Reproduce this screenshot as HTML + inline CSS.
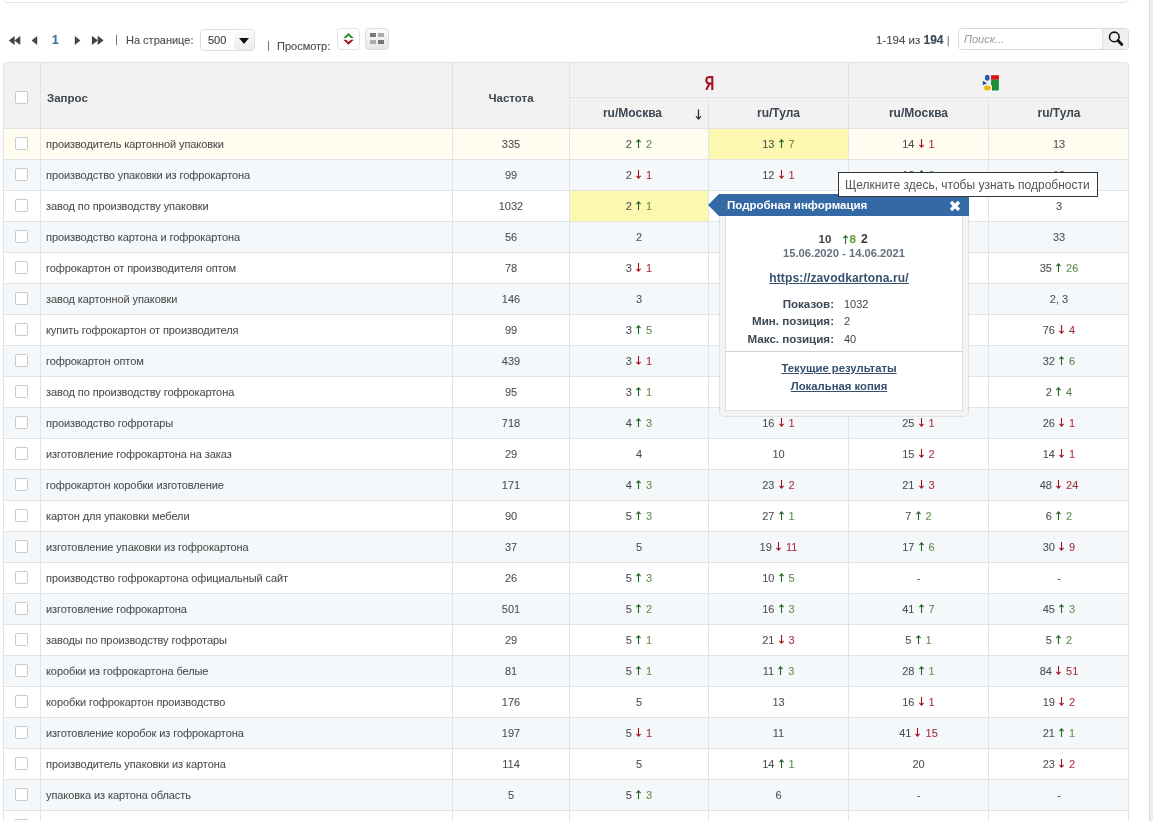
<!DOCTYPE html>
<html><head><meta charset="utf-8"><style>
*{box-sizing:border-box}
html,body{margin:0;padding:0;background:#fff;width:1153px;height:821px;overflow:hidden;position:relative;font-family:"Liberation Sans",sans-serif;}
.abs{position:absolute}
#topbox{position:absolute;left:3px;top:-10px;width:1126px;height:13px;border:1px solid #e3e3e3;border-radius:4px;background:#fff}
#scroll{position:absolute;left:1149px;top:0;width:4px;height:821px;background:#ececec;border-left:1px solid #d9d9d9}
#table{position:absolute;left:3px;top:62px;width:1126px;height:800px;border:1px solid #e3e3e3;border-radius:4px 4px 0 0;background:#f2f2f2;overflow:hidden}
.row{position:absolute;left:4px;width:1124px;height:30px}
.hl{position:absolute;height:30px;background:#fdf8b0}
.hline{position:absolute;left:4px;width:1124px;height:1px;background:#e1e3e4}
.vline{position:absolute;width:1px;height:800px;background:#e1e3e4}
.cb{position:absolute;width:13px;height:13px;border:1px solid #c9c9c9;border-radius:1.5px;background:#fff}
.t{position:absolute;height:30px;line-height:30px;font-size:11px;color:#4e4e4e;white-space:nowrap;-webkit-text-stroke:0.08px #4e4e4e}
.q{letter-spacing:-0.08px}
.q{left:46px}
.c{text-align:center}
.ar{vertical-align:0px;margin:0 2px 0 1px}
.nu{color:#649548} .nd{color:#b8283a}
.hd{position:absolute;font-weight:bold;color:#3d4852;white-space:nowrap;text-align:center;line-height:14px}
.tb{font-size:11px;color:#4a4a4a;line-height:14px;white-space:nowrap;-webkit-text-stroke:0.1px #4a4a4a}
.lbl{margin-top:0.4px;left:726px;width:108px;text-align:right;font-weight:bold;font-size:11.6px;color:#3d4852;line-height:15px;white-space:nowrap}
.val{left:844px;font-size:11px;color:#444;line-height:15px;margin-top:1px}
.lnk{left:721px;width:236px;text-align:center;font-weight:bold;font-size:11.3px;color:#34506e;text-decoration:underline;line-height:15px}
</style></head><body><div id="wrap" style="position:absolute;left:0;top:0;width:1153px;height:821px;will-change:transform">
<div id="topbox"></div>
<div id="scroll"></div>
<svg class="abs" style="left:0;top:30px" width="110" height="20" viewBox="0 30 110 20"><g fill="#454545"><path d="M8.7 40.4L14.6 35.9V44.9Z"/><path d="M14.4 40.4L20.3 35.9V44.9Z"/><path d="M31.6 40.4L37.2 35.9V44.9Z"/><path d="M80.4 40.4L74.8 35.9V44.9Z"/><path d="M97.8 40.4L91.9 35.9V44.9Z"/><path d="M103.5 40.4L97.6 35.9V44.9Z"/></g></svg><div class="abs tb" style="left:52px;top:33px;font-weight:bold;color:#2a7ba3;font-size:12px">1</div><div class="abs" style="left:92px;top:35.5px;width:0;height:0;border-top:4.8px solid transparent;border-bottom:4.8px solid transparent;border-left:5.6px solid #444"></div><div class="abs" style="left:97.6px;top:35.5px;width:0;height:0;border-top:4.8px solid transparent;border-bottom:4.8px solid transparent;border-left:5.6px solid #444"></div><div class="abs" style="left:116px;top:35px;width:1px;height:10px;background:#777"></div><div class="abs tb" style="left:126px;top:33px">На странице:</div><div class="abs" style="left:200px;top:29px;width:55px;height:22px;border:1px solid #dedede;border-radius:4px;background:#fff;overflow:hidden"><div class="abs tb" style="left:7px;top:3px;color:#333">500</div><div class="abs" style="left:33px;top:1px;width:20px;height:19px;border-radius:3px;background:linear-gradient(#fbfbfb,#ececec)"></div><div class="abs" style="left:38px;top:8px;width:0;height:0;border-left:5px solid transparent;border-right:5px solid transparent;border-top:6px solid #111"></div></div><div class="abs" style="left:268px;top:41px;width:1px;height:10px;background:#777"></div><div class="abs tb" style="left:277px;top:39px">Просмотр:</div><div class="abs" style="left:337px;top:28px;width:23px;height:22px;border:1px solid #e3e3e3;border-radius:4px;background:#fff"></div><svg class="abs" style="left:343px;top:32px" width="11" height="14" viewBox="0 0 11 14"><path d="M0.3 5.9L5.5 0.9L10.7 5.9H7.9L5.5 3.6L3.1 5.9Z" fill="#1f8a2a"/><path d="M0.3 7.8H3.1L5.5 10.1L7.9 7.8H10.7L5.5 12.8Z" fill="#a51218"/></svg><div class="abs" style="left:365px;top:28px;width:24px;height:22px;border:1px solid #dcdcdc;border-radius:4px;background:linear-gradient(#fafafa,#e6e6e6)"></div><div class="abs" style="left:370px;top:33px;width:6px;height:4px;background:#777"></div><div class="abs" style="left:378px;top:33px;width:6px;height:4px;background:#aaa"></div><div class="abs" style="left:370px;top:40px;width:6px;height:4px;background:#aaa"></div><div class="abs" style="left:378px;top:40px;width:6px;height:4px;background:#777"></div><div class="abs tb" style="left:876px;top:33px;font-size:11.5px">1-194 из <b style="color:#3a4955;font-size:12px">194</b> <span style="color:#7a8a99">|</span></div><div class="abs" style="left:958px;top:28px;width:171px;height:22px;border:1px solid #d9d9d9;border-radius:4px;background:#fff;overflow:hidden"><div class="abs" style="left:5px;top:3px;font-size:11px;font-style:italic;color:#9a9a9a;line-height:14px">Поиск...</div><div class="abs" style="left:143px;top:0;width:27px;height:20px;background:#efefef;border-left:1px solid #e2e2e2"></div></div><svg class="abs" style="left:1106px;top:30px" width="20" height="18" viewBox="0 0 20 18"><circle cx="8.3" cy="6.9" r="4.8" stroke="#111" stroke-width="1.6" fill="none"/><path d="M12 10.6L15.8 14.4" stroke="#111" stroke-width="2.8" stroke-linecap="round"/></svg>
<div id="table"></div>
<div class="row" style="top:129px;background:#fffdef"></div><div class="hl" style="left:709px;top:129px;width:139px"></div><div class="row" style="top:160px;background:#f5f8fb"></div><div class="row" style="top:191px;background:#ffffff"></div><div class="hl" style="left:570px;top:191px;width:138px"></div><div class="row" style="top:222px;background:#f5f8fb"></div><div class="row" style="top:253px;background:#ffffff"></div><div class="row" style="top:284px;background:#f5f8fb"></div><div class="row" style="top:315px;background:#ffffff"></div><div class="row" style="top:346px;background:#f5f8fb"></div><div class="row" style="top:377px;background:#ffffff"></div><div class="row" style="top:408px;background:#f5f8fb"></div><div class="row" style="top:439px;background:#ffffff"></div><div class="row" style="top:470px;background:#f5f8fb"></div><div class="row" style="top:501px;background:#ffffff"></div><div class="row" style="top:532px;background:#f5f8fb"></div><div class="row" style="top:563px;background:#ffffff"></div><div class="row" style="top:594px;background:#f5f8fb"></div><div class="row" style="top:625px;background:#ffffff"></div><div class="row" style="top:656px;background:#f5f8fb"></div><div class="row" style="top:687px;background:#ffffff"></div><div class="row" style="top:718px;background:#f5f8fb"></div><div class="row" style="top:749px;background:#ffffff"></div><div class="row" style="top:780px;background:#f5f8fb"></div><div class="row" style="top:811px;background:#ffffff"></div>
<div class="abs" style="left:570px;top:97px;width:558px;height:1px;background:#e1e3e4"></div>
<div class="abs" style="left:4px;top:128px;width:1124px;height:1px;background:#e1e3e4"></div>
<div class="hline" style="top:159px"></div><div class="hline" style="top:190px"></div><div class="hline" style="top:221px"></div><div class="hline" style="top:252px"></div><div class="hline" style="top:283px"></div><div class="hline" style="top:314px"></div><div class="hline" style="top:345px"></div><div class="hline" style="top:376px"></div><div class="hline" style="top:407px"></div><div class="hline" style="top:438px"></div><div class="hline" style="top:469px"></div><div class="hline" style="top:500px"></div><div class="hline" style="top:531px"></div><div class="hline" style="top:562px"></div><div class="hline" style="top:593px"></div><div class="hline" style="top:624px"></div><div class="hline" style="top:655px"></div><div class="hline" style="top:686px"></div><div class="hline" style="top:717px"></div><div class="hline" style="top:748px"></div><div class="hline" style="top:779px"></div><div class="hline" style="top:810px"></div><div class="hline" style="top:841px"></div><div class="vline" style="left:40px;top:63px"></div><div class="vline" style="left:452px;top:63px"></div><div class="vline" style="left:569px;top:63px"></div><div class="vline" style="left:708px;top:98px"></div><div class="vline" style="left:848px;top:63px"></div><div class="vline" style="left:988px;top:98px"></div>
<div class="cb" style="left:15px;top:137px"></div><div class="t q" style="top:129px">производитель картонной упаковки</div><div class="t c" style="top:129px;left:453px;width:116px">335</div><div class="t c" style="top:129px;left:570px;width:138px">2 <svg class="ar" width="5" height="9" viewBox="0 0 5 9"><path d="M2.5 0.6V9M0.4 3.1L2.5 0.9L4.6 3.1" stroke="#226622" stroke-width="1.1" fill="none"/></svg> <span class="nu">2</span></div><div class="t c" style="top:129px;left:709px;width:139px">13 <svg class="ar" width="5" height="9" viewBox="0 0 5 9"><path d="M2.5 0.6V9M0.4 3.1L2.5 0.9L4.6 3.1" stroke="#226622" stroke-width="1.1" fill="none"/></svg> <span class="nu">7</span></div><div class="t c" style="top:129px;left:849px;width:139px">14 <svg class="ar" width="5" height="9" viewBox="0 0 5 9"><path d="M2.5 0V8.4M0.4 5.9L2.5 8.1L4.6 5.9" stroke="#a8101c" stroke-width="1.1" fill="none"/></svg> <span class="nd">1</span></div><div class="t c" style="top:129px;left:989px;width:140px">13</div><div class="cb" style="left:15px;top:168px"></div><div class="t q" style="top:160px">производство упаковки из гофрокартона</div><div class="t c" style="top:160px;left:453px;width:116px">99</div><div class="t c" style="top:160px;left:570px;width:138px">2 <svg class="ar" width="5" height="9" viewBox="0 0 5 9"><path d="M2.5 0V8.4M0.4 5.9L2.5 8.1L4.6 5.9" stroke="#a8101c" stroke-width="1.1" fill="none"/></svg> <span class="nd">1</span></div><div class="t c" style="top:160px;left:709px;width:139px">12 <svg class="ar" width="5" height="9" viewBox="0 0 5 9"><path d="M2.5 0V8.4M0.4 5.9L2.5 8.1L4.6 5.9" stroke="#a8101c" stroke-width="1.1" fill="none"/></svg> <span class="nd">1</span></div><div class="t c" style="top:160px;left:849px;width:139px">13 <svg class="ar" width="5" height="9" viewBox="0 0 5 9"><path d="M2.5 0.6V9M0.4 3.1L2.5 0.9L4.6 3.1" stroke="#226622" stroke-width="1.1" fill="none"/></svg> <span class="nu">3</span></div><div class="t c" style="top:160px;left:989px;width:140px">13</div><div class="cb" style="left:15px;top:199px"></div><div class="t q" style="top:191px">завод по производству упаковки</div><div class="t c" style="top:191px;left:453px;width:116px">1032</div><div class="t c" style="top:191px;left:570px;width:138px">2 <svg class="ar" width="5" height="9" viewBox="0 0 5 9"><path d="M2.5 0.6V9M0.4 3.1L2.5 0.9L4.6 3.1" stroke="#226622" stroke-width="1.1" fill="none"/></svg> <span class="nu">1</span></div><div class="t c" style="top:191px;left:709px;width:139px">10 <svg class="ar" width="5" height="9" viewBox="0 0 5 9"><path d="M2.5 0.6V9M0.4 3.1L2.5 0.9L4.6 3.1" stroke="#226622" stroke-width="1.1" fill="none"/></svg> <span class="nu">8</span></div><div class="t c" style="top:191px;left:989px;width:140px">3</div><div class="cb" style="left:15px;top:230px"></div><div class="t q" style="top:222px">производство картона и гофрокартона</div><div class="t c" style="top:222px;left:453px;width:116px">56</div><div class="t c" style="top:222px;left:570px;width:138px">2</div><div class="t c" style="top:222px;left:989px;width:140px">33</div><div class="cb" style="left:15px;top:261px"></div><div class="t q" style="top:253px">гофрокартон от производителя оптом</div><div class="t c" style="top:253px;left:453px;width:116px">78</div><div class="t c" style="top:253px;left:570px;width:138px">3 <svg class="ar" width="5" height="9" viewBox="0 0 5 9"><path d="M2.5 0V8.4M0.4 5.9L2.5 8.1L4.6 5.9" stroke="#a8101c" stroke-width="1.1" fill="none"/></svg> <span class="nd">1</span></div><div class="t c" style="top:253px;left:989px;width:140px">35 <svg class="ar" width="5" height="9" viewBox="0 0 5 9"><path d="M2.5 0.6V9M0.4 3.1L2.5 0.9L4.6 3.1" stroke="#226622" stroke-width="1.1" fill="none"/></svg> <span class="nu">26</span></div><div class="cb" style="left:15px;top:292px"></div><div class="t q" style="top:284px">завод картонной упаковки</div><div class="t c" style="top:284px;left:453px;width:116px">146</div><div class="t c" style="top:284px;left:570px;width:138px">3</div><div class="t c" style="top:284px;left:989px;width:140px">2, 3</div><div class="cb" style="left:15px;top:323px"></div><div class="t q" style="top:315px">купить гофрокартон от производителя</div><div class="t c" style="top:315px;left:453px;width:116px">99</div><div class="t c" style="top:315px;left:570px;width:138px">3 <svg class="ar" width="5" height="9" viewBox="0 0 5 9"><path d="M2.5 0.6V9M0.4 3.1L2.5 0.9L4.6 3.1" stroke="#226622" stroke-width="1.1" fill="none"/></svg> <span class="nu">5</span></div><div class="t c" style="top:315px;left:989px;width:140px">76 <svg class="ar" width="5" height="9" viewBox="0 0 5 9"><path d="M2.5 0V8.4M0.4 5.9L2.5 8.1L4.6 5.9" stroke="#a8101c" stroke-width="1.1" fill="none"/></svg> <span class="nd">4</span></div><div class="cb" style="left:15px;top:354px"></div><div class="t q" style="top:346px">гофрокартон оптом</div><div class="t c" style="top:346px;left:453px;width:116px">439</div><div class="t c" style="top:346px;left:570px;width:138px">3 <svg class="ar" width="5" height="9" viewBox="0 0 5 9"><path d="M2.5 0V8.4M0.4 5.9L2.5 8.1L4.6 5.9" stroke="#a8101c" stroke-width="1.1" fill="none"/></svg> <span class="nd">1</span></div><div class="t c" style="top:346px;left:989px;width:140px">32 <svg class="ar" width="5" height="9" viewBox="0 0 5 9"><path d="M2.5 0.6V9M0.4 3.1L2.5 0.9L4.6 3.1" stroke="#226622" stroke-width="1.1" fill="none"/></svg> <span class="nu">6</span></div><div class="cb" style="left:15px;top:385px"></div><div class="t q" style="top:377px">завод по производству гофрокартона</div><div class="t c" style="top:377px;left:453px;width:116px">95</div><div class="t c" style="top:377px;left:570px;width:138px">3 <svg class="ar" width="5" height="9" viewBox="0 0 5 9"><path d="M2.5 0.6V9M0.4 3.1L2.5 0.9L4.6 3.1" stroke="#226622" stroke-width="1.1" fill="none"/></svg> <span class="nu">1</span></div><div class="t c" style="top:377px;left:989px;width:140px">2 <svg class="ar" width="5" height="9" viewBox="0 0 5 9"><path d="M2.5 0.6V9M0.4 3.1L2.5 0.9L4.6 3.1" stroke="#226622" stroke-width="1.1" fill="none"/></svg> <span class="nu">4</span></div><div class="cb" style="left:15px;top:416px"></div><div class="t q" style="top:408px">производство гофротары</div><div class="t c" style="top:408px;left:453px;width:116px">718</div><div class="t c" style="top:408px;left:570px;width:138px">4 <svg class="ar" width="5" height="9" viewBox="0 0 5 9"><path d="M2.5 0.6V9M0.4 3.1L2.5 0.9L4.6 3.1" stroke="#226622" stroke-width="1.1" fill="none"/></svg> <span class="nu">3</span></div><div class="t c" style="top:408px;left:709px;width:139px">16 <svg class="ar" width="5" height="9" viewBox="0 0 5 9"><path d="M2.5 0V8.4M0.4 5.9L2.5 8.1L4.6 5.9" stroke="#a8101c" stroke-width="1.1" fill="none"/></svg> <span class="nd">1</span></div><div class="t c" style="top:408px;left:849px;width:139px">25 <svg class="ar" width="5" height="9" viewBox="0 0 5 9"><path d="M2.5 0V8.4M0.4 5.9L2.5 8.1L4.6 5.9" stroke="#a8101c" stroke-width="1.1" fill="none"/></svg> <span class="nd">1</span></div><div class="t c" style="top:408px;left:989px;width:140px">26 <svg class="ar" width="5" height="9" viewBox="0 0 5 9"><path d="M2.5 0V8.4M0.4 5.9L2.5 8.1L4.6 5.9" stroke="#a8101c" stroke-width="1.1" fill="none"/></svg> <span class="nd">1</span></div><div class="cb" style="left:15px;top:447px"></div><div class="t q" style="top:439px">изготовление гофрокартона на заказ</div><div class="t c" style="top:439px;left:453px;width:116px">29</div><div class="t c" style="top:439px;left:570px;width:138px">4</div><div class="t c" style="top:439px;left:709px;width:139px">10</div><div class="t c" style="top:439px;left:849px;width:139px">15 <svg class="ar" width="5" height="9" viewBox="0 0 5 9"><path d="M2.5 0V8.4M0.4 5.9L2.5 8.1L4.6 5.9" stroke="#a8101c" stroke-width="1.1" fill="none"/></svg> <span class="nd">2</span></div><div class="t c" style="top:439px;left:989px;width:140px">14 <svg class="ar" width="5" height="9" viewBox="0 0 5 9"><path d="M2.5 0V8.4M0.4 5.9L2.5 8.1L4.6 5.9" stroke="#a8101c" stroke-width="1.1" fill="none"/></svg> <span class="nd">1</span></div><div class="cb" style="left:15px;top:478px"></div><div class="t q" style="top:470px">гофрокартон коробки изготовление</div><div class="t c" style="top:470px;left:453px;width:116px">171</div><div class="t c" style="top:470px;left:570px;width:138px">4 <svg class="ar" width="5" height="9" viewBox="0 0 5 9"><path d="M2.5 0.6V9M0.4 3.1L2.5 0.9L4.6 3.1" stroke="#226622" stroke-width="1.1" fill="none"/></svg> <span class="nu">3</span></div><div class="t c" style="top:470px;left:709px;width:139px">23 <svg class="ar" width="5" height="9" viewBox="0 0 5 9"><path d="M2.5 0V8.4M0.4 5.9L2.5 8.1L4.6 5.9" stroke="#a8101c" stroke-width="1.1" fill="none"/></svg> <span class="nd">2</span></div><div class="t c" style="top:470px;left:849px;width:139px">21 <svg class="ar" width="5" height="9" viewBox="0 0 5 9"><path d="M2.5 0V8.4M0.4 5.9L2.5 8.1L4.6 5.9" stroke="#a8101c" stroke-width="1.1" fill="none"/></svg> <span class="nd">3</span></div><div class="t c" style="top:470px;left:989px;width:140px">48 <svg class="ar" width="5" height="9" viewBox="0 0 5 9"><path d="M2.5 0V8.4M0.4 5.9L2.5 8.1L4.6 5.9" stroke="#a8101c" stroke-width="1.1" fill="none"/></svg> <span class="nd">24</span></div><div class="cb" style="left:15px;top:509px"></div><div class="t q" style="top:501px">картон для упаковки мебели</div><div class="t c" style="top:501px;left:453px;width:116px">90</div><div class="t c" style="top:501px;left:570px;width:138px">5 <svg class="ar" width="5" height="9" viewBox="0 0 5 9"><path d="M2.5 0.6V9M0.4 3.1L2.5 0.9L4.6 3.1" stroke="#226622" stroke-width="1.1" fill="none"/></svg> <span class="nu">3</span></div><div class="t c" style="top:501px;left:709px;width:139px">27 <svg class="ar" width="5" height="9" viewBox="0 0 5 9"><path d="M2.5 0.6V9M0.4 3.1L2.5 0.9L4.6 3.1" stroke="#226622" stroke-width="1.1" fill="none"/></svg> <span class="nu">1</span></div><div class="t c" style="top:501px;left:849px;width:139px">7 <svg class="ar" width="5" height="9" viewBox="0 0 5 9"><path d="M2.5 0.6V9M0.4 3.1L2.5 0.9L4.6 3.1" stroke="#226622" stroke-width="1.1" fill="none"/></svg> <span class="nu">2</span></div><div class="t c" style="top:501px;left:989px;width:140px">6 <svg class="ar" width="5" height="9" viewBox="0 0 5 9"><path d="M2.5 0.6V9M0.4 3.1L2.5 0.9L4.6 3.1" stroke="#226622" stroke-width="1.1" fill="none"/></svg> <span class="nu">2</span></div><div class="cb" style="left:15px;top:540px"></div><div class="t q" style="top:532px">изготовление упаковки из гофрокартона</div><div class="t c" style="top:532px;left:453px;width:116px">37</div><div class="t c" style="top:532px;left:570px;width:138px">5</div><div class="t c" style="top:532px;left:709px;width:139px">19 <svg class="ar" width="5" height="9" viewBox="0 0 5 9"><path d="M2.5 0V8.4M0.4 5.9L2.5 8.1L4.6 5.9" stroke="#a8101c" stroke-width="1.1" fill="none"/></svg> <span class="nd">11</span></div><div class="t c" style="top:532px;left:849px;width:139px">17 <svg class="ar" width="5" height="9" viewBox="0 0 5 9"><path d="M2.5 0.6V9M0.4 3.1L2.5 0.9L4.6 3.1" stroke="#226622" stroke-width="1.1" fill="none"/></svg> <span class="nu">6</span></div><div class="t c" style="top:532px;left:989px;width:140px">30 <svg class="ar" width="5" height="9" viewBox="0 0 5 9"><path d="M2.5 0V8.4M0.4 5.9L2.5 8.1L4.6 5.9" stroke="#a8101c" stroke-width="1.1" fill="none"/></svg> <span class="nd">9</span></div><div class="cb" style="left:15px;top:571px"></div><div class="t q" style="top:563px">производство гофрокартона официальный сайт</div><div class="t c" style="top:563px;left:453px;width:116px">26</div><div class="t c" style="top:563px;left:570px;width:138px">5 <svg class="ar" width="5" height="9" viewBox="0 0 5 9"><path d="M2.5 0.6V9M0.4 3.1L2.5 0.9L4.6 3.1" stroke="#226622" stroke-width="1.1" fill="none"/></svg> <span class="nu">3</span></div><div class="t c" style="top:563px;left:709px;width:139px">10 <svg class="ar" width="5" height="9" viewBox="0 0 5 9"><path d="M2.5 0.6V9M0.4 3.1L2.5 0.9L4.6 3.1" stroke="#226622" stroke-width="1.1" fill="none"/></svg> <span class="nu">5</span></div><div class="t c" style="top:563px;left:849px;width:139px">-</div><div class="t c" style="top:563px;left:989px;width:140px">-</div><div class="cb" style="left:15px;top:602px"></div><div class="t q" style="top:594px">изготовление гофрокартона</div><div class="t c" style="top:594px;left:453px;width:116px">501</div><div class="t c" style="top:594px;left:570px;width:138px">5 <svg class="ar" width="5" height="9" viewBox="0 0 5 9"><path d="M2.5 0.6V9M0.4 3.1L2.5 0.9L4.6 3.1" stroke="#226622" stroke-width="1.1" fill="none"/></svg> <span class="nu">2</span></div><div class="t c" style="top:594px;left:709px;width:139px">16 <svg class="ar" width="5" height="9" viewBox="0 0 5 9"><path d="M2.5 0.6V9M0.4 3.1L2.5 0.9L4.6 3.1" stroke="#226622" stroke-width="1.1" fill="none"/></svg> <span class="nu">3</span></div><div class="t c" style="top:594px;left:849px;width:139px">41 <svg class="ar" width="5" height="9" viewBox="0 0 5 9"><path d="M2.5 0.6V9M0.4 3.1L2.5 0.9L4.6 3.1" stroke="#226622" stroke-width="1.1" fill="none"/></svg> <span class="nu">7</span></div><div class="t c" style="top:594px;left:989px;width:140px">45 <svg class="ar" width="5" height="9" viewBox="0 0 5 9"><path d="M2.5 0.6V9M0.4 3.1L2.5 0.9L4.6 3.1" stroke="#226622" stroke-width="1.1" fill="none"/></svg> <span class="nu">3</span></div><div class="cb" style="left:15px;top:633px"></div><div class="t q" style="top:625px">заводы по производству гофротары</div><div class="t c" style="top:625px;left:453px;width:116px">29</div><div class="t c" style="top:625px;left:570px;width:138px">5 <svg class="ar" width="5" height="9" viewBox="0 0 5 9"><path d="M2.5 0.6V9M0.4 3.1L2.5 0.9L4.6 3.1" stroke="#226622" stroke-width="1.1" fill="none"/></svg> <span class="nu">1</span></div><div class="t c" style="top:625px;left:709px;width:139px">21 <svg class="ar" width="5" height="9" viewBox="0 0 5 9"><path d="M2.5 0V8.4M0.4 5.9L2.5 8.1L4.6 5.9" stroke="#a8101c" stroke-width="1.1" fill="none"/></svg> <span class="nd">3</span></div><div class="t c" style="top:625px;left:849px;width:139px">5 <svg class="ar" width="5" height="9" viewBox="0 0 5 9"><path d="M2.5 0.6V9M0.4 3.1L2.5 0.9L4.6 3.1" stroke="#226622" stroke-width="1.1" fill="none"/></svg> <span class="nu">1</span></div><div class="t c" style="top:625px;left:989px;width:140px">5 <svg class="ar" width="5" height="9" viewBox="0 0 5 9"><path d="M2.5 0.6V9M0.4 3.1L2.5 0.9L4.6 3.1" stroke="#226622" stroke-width="1.1" fill="none"/></svg> <span class="nu">2</span></div><div class="cb" style="left:15px;top:664px"></div><div class="t q" style="top:656px">коробки из гофрокартона белые</div><div class="t c" style="top:656px;left:453px;width:116px">81</div><div class="t c" style="top:656px;left:570px;width:138px">5 <svg class="ar" width="5" height="9" viewBox="0 0 5 9"><path d="M2.5 0.6V9M0.4 3.1L2.5 0.9L4.6 3.1" stroke="#226622" stroke-width="1.1" fill="none"/></svg> <span class="nu">1</span></div><div class="t c" style="top:656px;left:709px;width:139px">11 <svg class="ar" width="5" height="9" viewBox="0 0 5 9"><path d="M2.5 0.6V9M0.4 3.1L2.5 0.9L4.6 3.1" stroke="#226622" stroke-width="1.1" fill="none"/></svg> <span class="nu">3</span></div><div class="t c" style="top:656px;left:849px;width:139px">28 <svg class="ar" width="5" height="9" viewBox="0 0 5 9"><path d="M2.5 0.6V9M0.4 3.1L2.5 0.9L4.6 3.1" stroke="#226622" stroke-width="1.1" fill="none"/></svg> <span class="nu">1</span></div><div class="t c" style="top:656px;left:989px;width:140px">84 <svg class="ar" width="5" height="9" viewBox="0 0 5 9"><path d="M2.5 0V8.4M0.4 5.9L2.5 8.1L4.6 5.9" stroke="#a8101c" stroke-width="1.1" fill="none"/></svg> <span class="nd">51</span></div><div class="cb" style="left:15px;top:695px"></div><div class="t q" style="top:687px">коробки гофрокартон производство</div><div class="t c" style="top:687px;left:453px;width:116px">176</div><div class="t c" style="top:687px;left:570px;width:138px">5</div><div class="t c" style="top:687px;left:709px;width:139px">13</div><div class="t c" style="top:687px;left:849px;width:139px">16 <svg class="ar" width="5" height="9" viewBox="0 0 5 9"><path d="M2.5 0V8.4M0.4 5.9L2.5 8.1L4.6 5.9" stroke="#a8101c" stroke-width="1.1" fill="none"/></svg> <span class="nd">1</span></div><div class="t c" style="top:687px;left:989px;width:140px">19 <svg class="ar" width="5" height="9" viewBox="0 0 5 9"><path d="M2.5 0V8.4M0.4 5.9L2.5 8.1L4.6 5.9" stroke="#a8101c" stroke-width="1.1" fill="none"/></svg> <span class="nd">2</span></div><div class="cb" style="left:15px;top:726px"></div><div class="t q" style="top:718px">изготовление коробок из гофрокартона</div><div class="t c" style="top:718px;left:453px;width:116px">197</div><div class="t c" style="top:718px;left:570px;width:138px">5 <svg class="ar" width="5" height="9" viewBox="0 0 5 9"><path d="M2.5 0V8.4M0.4 5.9L2.5 8.1L4.6 5.9" stroke="#a8101c" stroke-width="1.1" fill="none"/></svg> <span class="nd">1</span></div><div class="t c" style="top:718px;left:709px;width:139px">11</div><div class="t c" style="top:718px;left:849px;width:139px">41 <svg class="ar" width="5" height="9" viewBox="0 0 5 9"><path d="M2.5 0V8.4M0.4 5.9L2.5 8.1L4.6 5.9" stroke="#a8101c" stroke-width="1.1" fill="none"/></svg> <span class="nd">15</span></div><div class="t c" style="top:718px;left:989px;width:140px">21 <svg class="ar" width="5" height="9" viewBox="0 0 5 9"><path d="M2.5 0.6V9M0.4 3.1L2.5 0.9L4.6 3.1" stroke="#226622" stroke-width="1.1" fill="none"/></svg> <span class="nu">1</span></div><div class="cb" style="left:15px;top:757px"></div><div class="t q" style="top:749px">производитель упаковки из картона</div><div class="t c" style="top:749px;left:453px;width:116px">114</div><div class="t c" style="top:749px;left:570px;width:138px">5</div><div class="t c" style="top:749px;left:709px;width:139px">14 <svg class="ar" width="5" height="9" viewBox="0 0 5 9"><path d="M2.5 0.6V9M0.4 3.1L2.5 0.9L4.6 3.1" stroke="#226622" stroke-width="1.1" fill="none"/></svg> <span class="nu">1</span></div><div class="t c" style="top:749px;left:849px;width:139px">20</div><div class="t c" style="top:749px;left:989px;width:140px">23 <svg class="ar" width="5" height="9" viewBox="0 0 5 9"><path d="M2.5 0V8.4M0.4 5.9L2.5 8.1L4.6 5.9" stroke="#a8101c" stroke-width="1.1" fill="none"/></svg> <span class="nd">2</span></div><div class="cb" style="left:15px;top:788px"></div><div class="t q" style="top:780px">упаковка из картона область</div><div class="t c" style="top:780px;left:453px;width:116px">5</div><div class="t c" style="top:780px;left:570px;width:138px">5 <svg class="ar" width="5" height="9" viewBox="0 0 5 9"><path d="M2.5 0.6V9M0.4 3.1L2.5 0.9L4.6 3.1" stroke="#226622" stroke-width="1.1" fill="none"/></svg> <span class="nu">3</span></div><div class="t c" style="top:780px;left:709px;width:139px">6</div><div class="t c" style="top:780px;left:849px;width:139px">-</div><div class="t c" style="top:780px;left:989px;width:140px">-</div><div class="cb" style="left:15px;top:819px"></div>
<div class="cb" style="left:15px;top:91px"></div><div class="hd" style="left:47px;top:91px;text-align:left;font-size:11.5px">Запрос</div><div class="hd" style="left:453px;top:91px;width:116px;font-size:11.5px">Частота</div><div class="hd" style="left:570px;top:106px;width:125px;font-size:12px;text-align:center">ru/Москва</div><svg class="abs" style="left:695px;top:109px" width="7" height="11" viewBox="0 0 7 11"><path d="M3.5 0.5V10M1 7.4L3.5 10L6 7.4" stroke="#333" stroke-width="1.3" fill="none"/></svg><div class="hd" style="left:709px;top:106px;width:139px;font-size:12px">ru/Тула</div><div class="hd" style="left:849px;top:106px;width:139px;font-size:12px">ru/Москва</div><div class="hd" style="left:989px;top:106px;width:140px;font-size:12px">ru/Тула</div><svg class="abs" style="left:705px;top:75px" width="9" height="15" viewBox="0 0 9 15"><path d="M7.3 15V2H5C2.7 2 1.3 3.4 1.3 5.3C1.3 7.2 2.6 8.6 4.8 8.6H7.3M4.6 8.6L1.2 15" stroke="#a8101e" stroke-width="2.1" fill="none"/></svg><svg class="abs" style="left:982px;top:74px" width="18" height="17" viewBox="0 0 18 17"><ellipse cx="5.3" cy="3.8" rx="2.4" ry="3" fill="#1c5fb8"/><path d="M0.8 6.8L5 9.2L0.8 11.2Z" fill="#1d4f93"/><ellipse cx="5.5" cy="14" rx="3.5" ry="2.4" fill="#f2b70f"/><path d="M9 1.2H16.9V5.8H9Z" fill="#d8141a"/><path d="M9 5.8H16.9V15.5C16.9 16 16.5 16.4 16 16.4H10L10 12C9 11 8.5 9 9.2 8Z" fill="#1c8f3a"/></svg>
<div class="abs" style="left:719px;top:205px;width:250px;height:212px;border:1px solid #e2e2e2;border-radius:5px;background:#f2f2f2"></div><div class="abs" style="left:725px;top:214px;width:238px;height:197px;border:1px solid #e0e0e0;background:#fff"></div><svg class="abs" style="left:708px;top:194px" width="261" height="22" viewBox="0 0 261 22"><path d="M0 11L11 0H261V22H11Z" fill="#3569a5"/></svg><div class="abs" style="left:727px;top:197px;font-size:11.5px;font-weight:bold;color:#fff;line-height:16px">Подробная информация</div><svg class="abs" style="left:949px;top:200px" width="12" height="12" viewBox="0 0 12 12"><path d="M2 2L10 10M10 2L2 10" stroke="#fff" stroke-width="3.2" stroke-linecap="butt"/></svg><div class="abs" style="left:818.5px;top:232px;font-weight:bold;font-size:11.5px;line-height:14px;color:#444">10</div><svg class="abs" style="left:843px;top:234.5px" width="5" height="9" viewBox="0 0 5 9"><path d="M2.5 0.8V9M0.3 3.1L2.5 0.9L4.7 3.1" stroke="#2a6e2a" stroke-width="1.1" fill="none"/></svg><div class="abs" style="left:849.5px;top:232px;font-weight:bold;font-size:11.5px;line-height:14px;color:#58a02c">8</div><div class="abs" style="left:861px;top:231.5px;font-weight:bold;font-size:12.2px;line-height:14px;color:#3a3a3a">2</div><div class="abs" style="left:726px;top:246px;width:236px;text-align:center;font-weight:bold;font-size:11.2px;line-height:14px;color:#627281">15.06.2020 - 14.06.2021</div><div class="abs" style="left:716px;top:271px;width:246px;text-align:center;font-weight:bold;font-size:12px;letter-spacing:0.15px;line-height:15px;color:#34506e;text-decoration:underline">https://zavodkartona.ru/</div><div class="abs lbl" style="top:296px">Показов:</div><div class="abs val" style="top:296px">1032</div><div class="abs lbl" style="top:313px">Мин. позиция:</div><div class="abs val" style="top:313px">2</div><div class="abs lbl" style="top:331px">Макс. позиция:</div><div class="abs val" style="top:331px">40</div><div class="abs" style="left:726px;top:351px;width:236px;height:1px;background:#cfcfcf"></div><div class="abs lnk" style="top:361px">Текущие результаты</div><div class="abs lnk" style="top:379px">Локальная копия</div><div class="abs" style="left:838px;top:172px;width:260px;height:25px;border:1px solid #333;background:#fff;font-size:12px;line-height:24px;padding-left:6px;color:#555;white-space:nowrap">Щелкните здесь, чтобы узнать подробности</div>
</div></body></html>
